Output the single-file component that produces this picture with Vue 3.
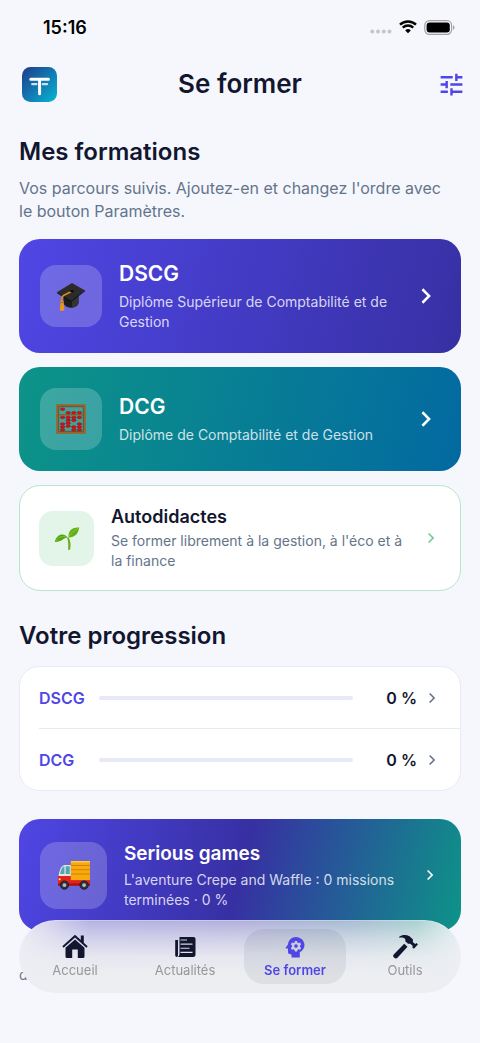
<template>
    <div class="page">
        <div class="status">
            <span class="time">15:16</span>
            <div class="status-icons">
                <svg class="dots" viewBox="0 0 22 5" aria-hidden="true">
                    <circle cx="2.3" cy="2.5" r="2" />
                    <circle cx="8" cy="2.5" r="2" />
                    <circle cx="13.8" cy="2.5" r="2" />
                    <circle cx="19.5" cy="2.5" r="2" />
                </svg>
                <svg class="wifi" viewBox="0 0 18 14" aria-hidden="true">
                    <path d="M1 4.7a11.5 11.5 0 0 1 16 0" />
                    <path d="M3.8 7.6a7.5 7.5 0 0 1 10.4 0" />
                    <path class="wifi-dot" d="M6.2 10.4a4.1 4.1 0 0 1 5.6 0L9 13.3z" />
                </svg>
                <svg class="battery" viewBox="0 0 31 15" aria-hidden="true">
                    <rect class="battery-case" x="0.8" y="0.7" width="26.8" height="13.6" rx="4.6" />
                    <rect x="2.6" y="2.5" width="23.2" height="10" rx="3" />
                    <path class="battery-tip" d="M29 5.2c2 .8 2 3.8 0 4.6z" />
                </svg>
            </div>
        </div>

        <header class="header">
            <svg class="logo" viewBox="0 0 35 35" role="img" aria-label="Logo">
                <defs>
                    <linearGradient id="logoFill" x1="0" y1="0" x2="1" y2="1">
                        <stop offset="0" stop-color="#1e3a8a" />
                        <stop offset="1" stop-color="#06b6d4" />
                    </linearGradient>
                </defs>
                <rect width="35" height="35" rx="8.5" fill="url(#logoFill)" />
                <path class="logo-main" d="M8.8 12.2h17.6M17.6 12.2v14.6" />
                <path class="logo-thin" d="M10.2 17.2h4.3M20.8 17.2h4.3" />
            </svg>
            <h1>Se former</h1>
            <button class="settings" type="button" aria-label="Paramètres">
                <svg viewBox="0 0 24 24" aria-hidden="true">
                    <path d="M3 17v2h6v-2H3zM3 5v2h10V5H3zm10 16v-2h8v-2h-8v-2h-2v6h2zM7 9v2H3v2h4v2h2V9H7zm14 4v-2H11v2h10zm-6-4h2V7h4V5h-4V3h-2v6z" />
                </svg>
            </button>
        </header>

        <main class="content">
            <h2>Mes formations</h2>
            <p class="intro">Vos parcours suivis. Ajoutez-en et changez l'ordre avec le bouton Paramètres.</p>

            <div class="courses">
                <a class="card dscg" href="#dscg">
                    <span class="tile">
                        <svg class="emoji" viewBox="0 0 32 32" aria-hidden="true">
                            <path d="M8 16v7c0 3 4 5.5 8 5.5s8-2.5 8-5.5v-8z" fill="#1c1c1c" />
                            <path d="M17 20l7-5v8c0 3-3 5-7 5.5z" fill="#343434" />
                            <path d="M1 12L17 2l14 8-15 12z" fill="#2b2b2b" />
                            <path d="M1 12l15 9L31 10v1L16 22.5 1 13z" fill="#111" />
                            <path d="M17 11L8 15.5c-1.5 1-2 3-2 6.5" fill="none" stroke="#d98c1c" stroke-width="1.8" />
                            <ellipse cx="17" cy="11" rx="2" ry="1.3" fill="#0c0c0c" />
                            <path d="M5 21h3l1 10c-1 1.2-4 1.2-5 0z" fill="#e8951c" />
                            <path d="M5 23h3.2" stroke="#a9640e" stroke-width="1" />
                        </svg>
                    </span>
                    <span class="body">
                        <strong>DSCG</strong>
                        <span class="desc">Diplôme Supérieur de Comptabilité et de Gestion</span>
                    </span>
                    <svg class="chevron" viewBox="0 0 16 16" aria-hidden="true"><path d="M4.8 2l6 6-6 6" /></svg>
                </a>

                <a class="card dcg" href="#dcg">
                    <span class="tile">
                        <svg class="emoji" viewBox="0 0 32 32" aria-hidden="true">
                            <rect x="1.5" y="1.5" width="29" height="29" fill="none" stroke="#9a652b" stroke-width="2.6" />
                            <rect x="3" y="3" width="26" height="26" fill="none" stroke="#5c3a14" stroke-width="0.7" />
                            <path d="M7 4v24M13 4v24M19 4v24M25 4v24" stroke="#a87b45" stroke-width="0.9" />
                            <path d="M3 11.5h26" stroke="#8b5a24" stroke-width="1.4" />
                            <g fill="#d3141a" stroke="#8e0b10" stroke-width="0.5">
                                <ellipse v-for="(bead, i) in beads" :key="i" :cx="bead[0]" :cy="bead[1]" rx="2.5" ry="1.3" />
                            </g>
                        </svg>
                    </span>
                    <span class="body">
                        <strong>DCG</strong>
                        <span class="desc">Diplôme de Comptabilité et de Gestion</span>
                    </span>
                    <svg class="chevron" viewBox="0 0 16 16" aria-hidden="true"><path d="M4.8 2l6 6-6 6" /></svg>
                </a>

                <a class="card auto" href="#autodidactes">
                    <span class="tile">
                        <svg class="emoji" viewBox="0 0 32 32" aria-hidden="true">
                            <path d="M17.5 15c3 4 3.5 9 2.3 15.5h-2.5c.6-6 .3-11-1.3-14.5z" fill="#6cae1c" />
                            <path d="M18 15.5C17 8 21 2.5 31 3c-1 7.5-5 12-13 12.5z" fill="#62b017" />
                            <path d="M17 15.5C12 9 3 11 1 21c7 .5 11-5 16-5.5z" fill="#5aa514" />
                            <path d="M18.5 14C21 9 25 7 30 4" fill="none" stroke="#8ed03c" stroke-width="1" />
                            <path d="M2 20c3-5 8-7 14-5" fill="none" stroke="#86c838" stroke-width="1" />
                        </svg>
                    </span>
                    <span class="body">
                        <strong>Autodidactes</strong>
                        <span class="desc">Se former librement à la gestion, à l'éco et à la finance</span>
                    </span>
                    <svg class="chevron" viewBox="0 0 16 16" aria-hidden="true"><path d="M4.8 2l6 6-6 6" /></svg>
                </a>
            </div>

            <h2 class="progress-title">Votre progression</h2>
            <div class="progress-card">
                <a v-for="item in progress" :key="item.name" class="row" :href="item.link">
                    <span class="row-name">{{ item.name }}</span>
                    <span class="bar" role="progressbar" :aria-valuenow="item.value" :aria-label="item.name">
                        <span class="fill" :style="{ width: item.value + '%' }"></span>
                    </span>
                    <span class="row-value">{{ item.value }} %</span>
                    <svg class="chevron" viewBox="0 0 16 16" aria-hidden="true"><path d="M4.8 2l6 6-6 6" /></svg>
                </a>
            </div>

            <a class="card games" href="#games">
                <span class="tile">
                    <svg class="emoji" viewBox="0 0 32 32" aria-hidden="true">
                        <rect x="13" y="3" width="18" height="18" fill="#f9ab0e" />
                        <path d="M13 7h18M13 11h18M13 15h18" stroke="#c87a06" stroke-width="0.8" />
                        <path d="M13 3.5h18" stroke="#ffd04d" stroke-width="1.2" />
                        <path d="M13 6.5H7C4 7 2 12 1.5 17v8H13z" fill="#e9e4dc" />
                        <path d="M3 15c.6-3.5 2-7 4-7.2V15zM8.200 7.800H12V15H8.200z" fill="#48a9b8" />
                        <path d="M1 17h12v4h18v5H1z" fill="#e3221b" />
                        <path d="M1 24h30v2H1z" fill="#a51210" />
                        <circle cx="2.5" cy="20" r="1" fill="#ffe58a" />
                        <g fill="#30343a" stroke="#17191c" stroke-width="0.8">
                            <circle cx="7" cy="25.5" r="3.9" />
                            <circle cx="25.5" cy="25.5" r="3.9" />
                        </g>
                        <g fill="#b4bcc4">
                            <circle cx="7" cy="25.5" r="1.8" />
                            <circle cx="25.5" cy="25.5" r="1.8" />
                        </g>
                    </svg>
                </span>
                <span class="body">
                    <strong>Serious games</strong>
                    <span class="desc">L'aventure Crepe and Waffle : 0 missions terminées · 0 %</span>
                </span>
                <svg class="chevron" viewBox="0 0 16 16" aria-hidden="true"><path d="M4.8 2l6 6-6 6" /></svg>
            </a>
            <p class="more">d</p>
        </main>

        <nav class="tabs">
            <button
                v-for="tab in tabs"
                :key="tab.label"
                type="button"
                class="tab"
                :class="{ active: current === tab.label }"
                @click="current = tab.label"
            >
                <svg viewBox="0 0 26 26" aria-hidden="true">
                    <path v-for="d in tab.paths" :key="d" :d="d" fill-rule="evenodd" />
                </svg>
                <span>{{ tab.label }}</span>
            </button>
        </nav>
    </div>
</template>

<script setup>
import { ref } from 'vue'

const current = ref('Se former')

const progress = [
    { name: 'DSCG', value: 0, link: '#progression-dscg' },
    { name: 'DCG', value: 0, link: '#progression-dcg' }
]

// boules du boulier
const beads = [
    [7, 5.5], [13, 9.3], [19, 9.3], [25, 9.3],
    [7, 14.3], [13, 14.3], [19, 14.3], [25, 14.3],
    [13, 17.4], [19, 17.4], [7, 21.3], [13, 20.5], [25, 21.3],
    [7, 24.4], [13, 23.6], [19, 24.4], [25, 24.4],
    [7, 27.5], [19, 27.5], [25, 27.5]
]

const tabs = [
    {
        label: 'Accueil',
        paths: [
            'M13 .8L.3 12.200l1.300 1.500L13 3.600l11.400 10.100 1.300-1.500-3.900-3.500V1.500h-3v4.500z',
            'M13 5.400L3.500 13.800V22.500q0 1.500 1.500 1.500h5.200v-8.500h5.600V24H21q1.500 0 1.500-1.500V13.800z'
        ]
    },
    {
        label: 'Actualités',
        paths: [
            'M7.500 3H21.500Q23.500 3 23.500 5V20.500Q23.500 23 21 23H5.500q2-.6 2-3zM8.500 5.500v1.100h6.500V5.500zM8.500 9.600v1.100h12V9.600zM8.500 13.700v1.100h9v-1.100zM8.500 17.800v1.100h12v-1.100z',
            'M3.200 6h2.800v15c0 2.700-2.800 2.500-2.800 0z'
        ]
    },
    {
        label: 'Se former',
        paths: [
            'M14 3C9.700 3 6.300 6.200 6.100 10.300L3.800 13.400c-.3.400 0 1 .5 1H6v3.500c0 1.300 1 2.300 2.300 2.300h1.200V23.500h8.300v-5.200c2.700-1.300 4.700-4 4.700-7.200C22.500 6.600 18.500 3 14 3zm-1.100 3.900h2.200l.4 1.600 1 .6 1.600-.5 1.100 1.900-1.200 1.100v1.200l1.200 1.100-1.100 1.900-1.600-.5-1 .6-.4 1.600h-2.200l-.4-1.600-1-.6-1.600.5-1.100-1.900 1.200-1.100v-1.200L8.800 10.500l1.100-1.900 1.600.5 1-.6zM14 10.300a1.800 1.800 0 1 0 0 3.600 1.800 1.800 0 0 0 0-3.600z'
        ]
    },
    {
        label: 'Outils',
        paths: [
            'M7.200 2.800C10 .8 14 .5 17.500 2.200L21 5.500 20.800 8l2.300 2 1.500-1 1.300 1.500-4 4.300-1.600-1.400.5-1.400-2.500-2.300-2.300.1-2.700-2.500V5C11.300 3.500 9.800 3.200 7.200 3.700z',
            'M12.200 9.800l3.300 3L5.500 23.800c-2 2.200-5.800-1.200-3.800-3.300z'
        ]
    }
]
</script>

<style>
body {
    margin: 0;
    background: #f6f7fd;
}
</style>

<style scoped>
.page {
    min-height: 100vh;
    box-sizing: border-box;
    color: #12162f;
    font-family: Inter, "Liberation Sans", sans-serif;
    background: #f6f7fd;
}

.status {
    display: flex;
    align-items: center;
    justify-content: space-between;
    height: 54px;
    padding: 0 25px 0 43px;
    color: #000;
}

.time {
    font-size: 18px;
    font-weight: 600;
}

.status-icons {
    display: flex;
    align-items: center;
    gap: 7px;
}

.dots {
    width: 22px;
    height: 5px;
    margin-top: 8px;
    fill: #c5c6cc;
}

.wifi {
    width: 18px;
    height: 14px;
    fill: none;
    stroke: #000;
    stroke-width: 2.5;
}

.wifi-dot {
    fill: #000;
    stroke: none;
}

.battery {
    width: 31px;
    height: 15px;
}

.battery-case {
    fill: none;
    stroke: #a2a3a8;
    stroke-width: 1.2;
}

.battery-tip {
    fill: #a2a3a8;
}

.header {
    display: grid;
    grid-template-columns: 35px 1fr 35px;
    align-items: center;
    height: 60px;
    padding: 0 11px 0 22px;
}

.logo {
    width: 35px;
    height: 35px;
}

.logo-main,
.logo-thin {
    fill: none;
    stroke: #fff;
    stroke-width: 3;
    stroke-linecap: round;
}

.logo-thin {
    stroke: #c9e4f2;
    stroke-width: 2.2;
}

.header h1 {
    margin: 0;
    padding-right: 11px;
    font-size: 26px;
    font-weight: 600;
    line-height: 32px;
    text-align: center;
}

.settings {
    display: flex;
    justify-content: center;
    padding: 0;
    border: 0;
    background: none;
    cursor: pointer;
}

.settings svg {
    flex: none;
    width: 29px;
    height: 29px;
    fill: #4f46e5;
}

.content {
    padding: 22px 19px 50px;
}

h2 {
    margin: 0;
    font-size: 24px;
    font-weight: 600;
    line-height: 32px;
}

.intro {
    margin: 9px 0 16px;
    padding-right: 16px;
    color: #64748b;
    font-size: 16px;
    line-height: 23px;
}

.courses {
    display: grid;
    gap: 14px;
}

.card {
    display: flex;
    align-items: center;
    box-sizing: border-box;
    padding: 21px;
    border-radius: 21px;
    color: #fff;
    text-decoration: none;
}

.dscg {
    background: linear-gradient(104deg, #4f46e5, #3730a3);
}

.dcg {
    background: linear-gradient(104deg, #0d9488, #0369a1);
}

.auto {
    padding: 19px;
    border: 1px solid #b9e4cb;
    color: #12162f;
    background: #fff;
}

.games {
    margin-top: 28px;
    background: linear-gradient(104deg, #4f46e5, #3730a3 50%, #0d9488);
}

.tile {
    display: flex;
    flex: none;
    align-items: center;
    justify-content: center;
    width: 62px;
    height: 62px;
    margin-right: 17px;
    border-radius: 16px;
    background: rgba(255, 255, 255, 0.2);
}

.auto .tile {
    width: 55px;
    height: 55px;
    border-radius: 14px;
    background: #e3f4e9;
}

.games .tile {
    width: 67px;
    height: 67px;
    border-radius: 17px;
}

.emoji {
    width: 30px;
    height: 30px;
}

.auto .emoji {
    width: 26px;
    height: 26px;
}

.games .emoji {
    width: 34px;
    height: 34px;
}

.body {
    display: grid;
    flex: 1;
    gap: 4px;
    min-width: 0;
}

.body strong {
    font-size: 21px;
    font-weight: 600;
    line-height: 28px;
}

.desc {
    color: rgba(255, 255, 255, 0.8);
    font-size: 14px;
    line-height: 20px;
}

.auto .body,
.games .body {
    gap: 2px;
}

.auto strong {
    font-size: 18px;
    line-height: 24px;
}

.auto .desc {
    color: #64748b;
}

.games strong {
    font-size: 19px;
}

.chevron {
    flex: none;
    width: 18px;
    height: 18px;
    margin: 0 5px 0 12px;
    fill: none;
    stroke: #fff;
    stroke-width: 2.2;
}

.auto .chevron,
.games .chevron,
.row .chevron {
    width: 12px;
    height: 12px;
    margin-right: 4px;
}

.auto .chevron {
    stroke: #6ccb92;
}

.progress-title {
    margin: 29px 0 14px;
}

.progress-card {
    border: 1px solid #e8eaf6;
    border-radius: 20px;
    background: #fff;
}

.row {
    display: flex;
    align-items: center;
    height: 61px;
    margin-left: 19px;
    padding-right: 18px;
    color: #12162f;
    font-size: 16px;
    font-weight: 600;
    text-decoration: none;
}

.row + .row {
    border-top: 1px solid #e8eaf6;
}

.row-name {
    width: 60px;
    color: #4f46e5;
}

.bar {
    flex: 1;
    height: 4px;
    overflow: hidden;
    border-radius: 2px;
    background: #e7e9f6;
}

.fill {
    display: block;
    height: 100%;
    background: #4f46e5;
}

.row-value {
    width: 64px;
    text-align: right;
}

.row .chevron {
    margin-left: 9px;
    stroke: #64748b;
}

.more {
    margin: 34px 0 0;
    color: #64748b;
    font-size: 14px;
    line-height: 20px;
}

/* frosted bar, tinted along its top edge */
.tabs {
    position: fixed;
    right: 19px;
    bottom: 50px;
    left: 19px;
    display: flex;
    padding: 9px 1px;
    border-radius: 37px;
    background:
        linear-gradient(rgba(237, 238, 242, 0), rgba(237, 238, 242, 0.5) 25%, rgba(237, 238, 242, 0.88) 50%, #edeef2 75%),
        linear-gradient(90deg, #ececf6, #b4b1e3 16%, #b2afdc 50%, #a6bcd2 75%, #a9d0d1 90%, #e6f2f3);
    box-shadow: inset 0 1px 0 rgba(255, 255, 255, 0.3);
}

.tab {
    display: flex;
    flex: 1;
    flex-direction: column;
    align-items: center;
    gap: 2px;
    height: 55px;
    margin: 0 4px;
    padding: 5px 0;
    border: 0;
    border-radius: 20px;
    color: #97979b;
    background: none;
    font-family: inherit;
    font-size: 13px;
    line-height: 16px;
    cursor: pointer;
}

.tab svg {
    width: 26px;
    height: 26px;
    fill: #12162f;
}

.tab.active {
    color: #4f46e5;
    background: rgba(18, 22, 47, 0.07);
    font-weight: 600;
}

.tab.active svg {
    fill: #4f46e5;
}
</style>
